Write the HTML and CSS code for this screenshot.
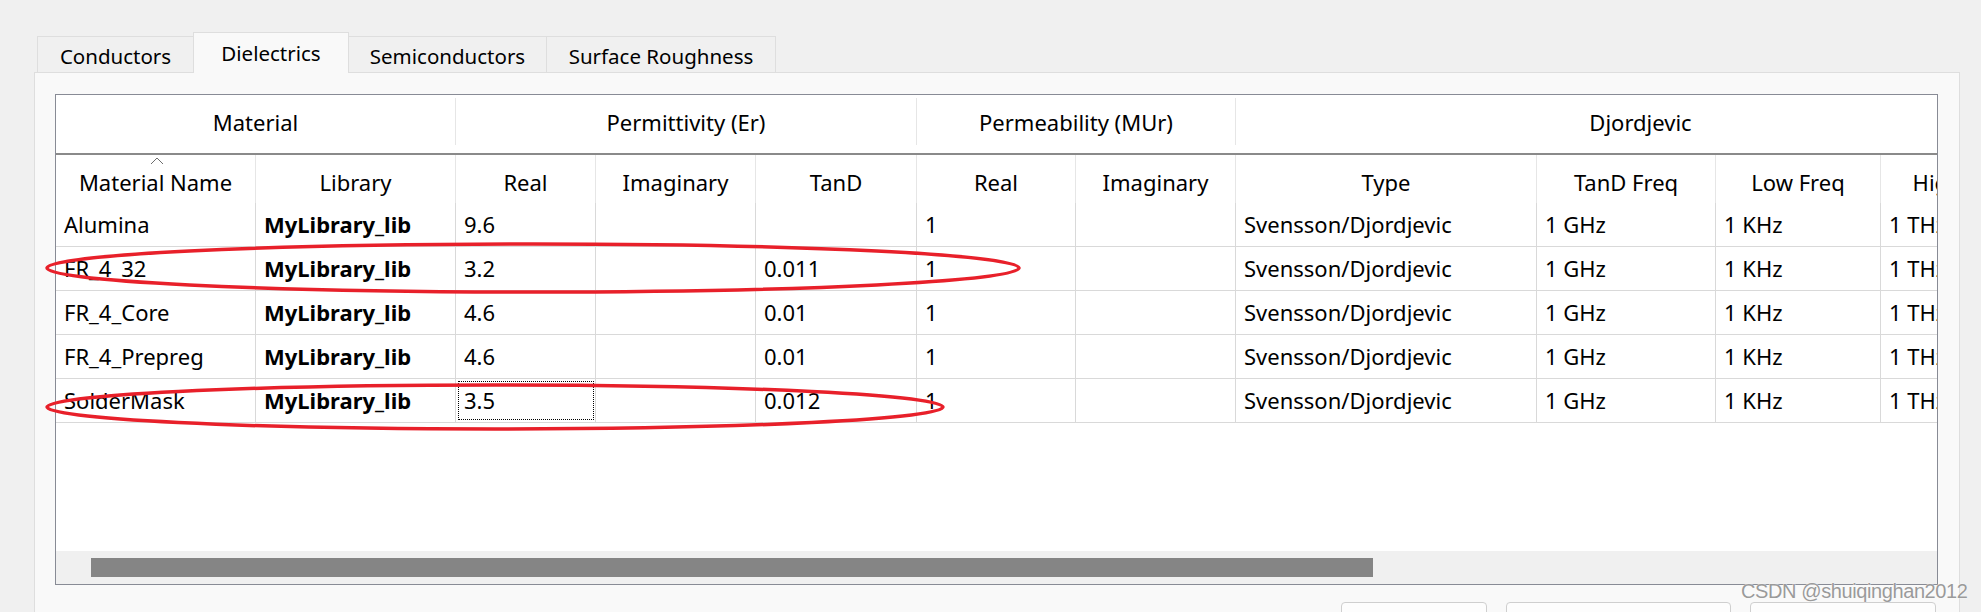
FILE: index.html
```html
<!DOCTYPE html>
<html lang="en">
<head>
  <meta charset="UTF-8" />
  <title>Material Library - Dielectrics</title>
  <link rel="stylesheet" href="styles.css">
</head>
<body>
  <!-- Tab strip -->
  <div class="tabs">
    <div class="tab tab-conductors">Conductors</div>
    <div class="tab tab-dielectrics active">Dielectrics</div>
    <div class="tab tab-semis">Semiconductors</div>
    <div class="tab tab-rough">Surface Roughness</div>
  </div>

  <div class="pane">
    <div class="grid-frame">
      <div class="grid-view">
        <div class="group-row">
          <div class="group g-material">Material</div>
          <div class="group g-perm">Permittivity (Er)</div>
          <div class="group g-mu">Permeability (MUr)</div>
          <div class="group g-djord">Djordjevic</div>
        </div>

        <div class="row head-row">
          <div class="cell sorted">
            <svg class="sort-arrow" width="14" height="8" viewBox="0 0 14 8">
              <polyline points="1,7 7,1 13,7" fill="none" stroke="#6d6d6d" stroke-width="1" />
            </svg>
            Material Name
          </div>
          <div class="cell">Library</div>
          <div class="cell">Real</div>
          <div class="cell">Imaginary</div>
          <div class="cell">TanD</div>
          <div class="cell">Real</div>
          <div class="cell">Imaginary</div>
          <div class="cell">Type</div>
          <div class="cell">TanD Freq</div>
          <div class="cell">Low Freq</div>
          <div class="cell">High Freq</div>
        </div>

        <div id="grid-body"></div>
      </div>

      <div class="hscroll">
        <div class="thumb"></div>
      </div>
    </div>

    <div class="buttons">
      <div class="btn btn-a"></div>
      <div class="btn btn-b"></div>
      <div class="btn btn-c"></div>
    </div>
  </div>

  <!-- Red annotation marks drawn over the grid -->
  <svg class="marks" width="1981" height="612" viewBox="0 0 1981 612">
    <ellipse cx="533" cy="268" rx="486" ry="24" />
    <ellipse cx="495" cy="407" rx="448" ry="22" />
  </svg>

  <div class="watermark">CSDN @shuiqinghan2012</div>

  <script>
    // Dielectric materials shown in the grid
    let materials = [
      { name: "Alumina",     lib: "MyLibrary_lib", real: "9.6", tand: "" },
      { name: "FR_4_32",     lib: "MyLibrary_lib", real: "3.2", tand: "0.011" },
      { name: "FR_4_Core",   lib: "MyLibrary_lib", real: "4.6", tand: "0.01" },
      { name: "FR_4_Prepreg",lib: "MyLibrary_lib", real: "4.6", tand: "0.01" },
      { name: "SolderMask",  lib: "MyLibrary_lib", real: "3.5", tand: "0.012" }
    ];

    let body = document.getElementById("grid-body");

    materials.forEach((m, index) => {
      let row = document.createElement("div");
      row.className = "row data-row";
      let focus = index === materials.length - 1 ? " focused" : "";
      row.innerHTML = `
        <div class="cell">${m.name}</div>
        <div class="cell lib">${m.lib}</div>
        <div class="cell${focus}">${m.real}</div>
        <div class="cell"></div>
        <div class="cell">${m.tand}</div>
        <div class="cell">1</div>
        <div class="cell"></div>
        <div class="cell">Svensson/Djordjevic</div>
        <div class="cell">1 GHz</div>
        <div class="cell">1 KHz</div>
        <div class="cell">1 THz</div>
      `;
      body.appendChild(row);
    });
  </script>
</body>
</html>
```

FILE: styles.css
```css
body {
  margin: 0;
  background: #f0f0f0;
  font-family: 'Noto Sans', sans-serif;
  font-size: 22px;
  color: #000;
  overflow: hidden;
  height: 612px;
  position: relative;
}

/* Tabs */
.tabs {
  display: flex;
  align-items: flex-end;
  padding-left: 37px;
  padding-top: 32px;
  height: 40px;
  font-size: 20.5px;
}
.tab {
  box-sizing: border-box;
  height: 36px;
  border: 1px solid #dedede;
  border-bottom: none;
  background: #f0f0f0;
  display: flex;
  align-items: center;
  justify-content: center;
  margin-left: -1px;
  padding-top: 2px;
}
.tab-conductors { width: 157px; margin-left: 0; }
.tab-dielectrics { width: 156px; }
.tab-semis { width: 199px; }
.tab-rough { width: 230px; }
.tab.active {
  height: 41px;
  margin-bottom: -1px;
  background: #f9f9f9;
  position: relative;
  z-index: 1;
  padding-top: 1px;
  padding-bottom: 2px;
}

/* Tab page */
.pane {
  margin-left: 34px;
  width: 1926px;
  height: 560px;
  box-sizing: border-box;
  border: 1px solid #dedede;
  background: #f9f9f9;
  padding: 21px 0 0 20px;
}

.grid-frame {
  width: 1883px;
  box-sizing: border-box;
  border: 1px solid #888b95;
  background: #fff;
}
.grid-view {
  height: 456px;
  overflow: hidden;
}

/* Column layout shared by header and data rows */
.row {
  display: grid;
  grid-template-columns: 200px 200px 140px 160px 161px 159px 160px 301px 179px 165px 165px;
  width: 1990px;
}
.cell {
  box-sizing: border-box;
  border-right: 1px solid #d9d9d9;
  white-space: nowrap;
  overflow: hidden;
}

.group-row {
  display: grid;
  grid-template-columns: 400px 461px 319px 810px;
  width: 1990px;
  height: 58px;
  border-bottom: 2px solid #8a8a8a;
  align-items: start;
}
.group {
  box-sizing: border-box;
  height: 47px;
  margin-top: 3px;
  border-right: 1px solid #e6e6e6;
  display: flex;
  align-items: center;
  justify-content: center;
}

.head-row {
  height: 48px;
}
.head-row .cell {
  border-right-color: #e6e6e6;
  display: flex;
  align-items: center;
  justify-content: center;
  padding-top: 5px;
}
.sorted {
  position: relative;
}
.sort-arrow {
  position: absolute;
  top: 2px;
  left: 94px;
}

.data-row {
  height: 44px;
  box-sizing: border-box;
  border-bottom: 1px solid #d9d9d9;
}
.data-row .cell {
  padding-left: 8px;
  line-height: 43px;
}
.data-row .lib {
  font-weight: bold;
}
.data-row .focused {
  outline: 1px dotted #000;
  outline-offset: -3px;
}

/* Horizontal scrollbar */
.hscroll {
  height: 33px;
  background: #f0f0f0;
  padding: 7px 0 0 35px;
  box-sizing: border-box;
}
.thumb {
  width: 1282px;
  height: 19px;
  background: #858585;
}

/* Dialog buttons peeking at the bottom */
.buttons {
  display: flex;
  justify-content: flex-end;
  gap: 19px;
  width: 1881px;
  margin-top: 17px;
}
.btn {
  height: 40px;
  box-sizing: border-box;
  border: 1px solid #cfcfcf;
  border-radius: 4px;
  background: #fdfdfd;
}
.btn-a { width: 146px; }
.btn-b { width: 225px; }
.btn-c { width: 186px; }

/* Annotation overlay */
.marks {
  position: absolute;
  left: 0;
  top: 0;
  pointer-events: none;
}
.marks ellipse {
  fill: none;
  stroke: #e8202a;
  stroke-width: 3.5;
}

.watermark {
  position: absolute;
  left: 1741px;
  top: 580px;
  font-family: 'Liberation Sans', Arial, sans-serif;
  font-size: 20px;
  color: #9a9a9a;
  text-shadow: 0 0 1px #fff, 0 0 1px #fff;
  letter-spacing: -0.4px;
}
```
